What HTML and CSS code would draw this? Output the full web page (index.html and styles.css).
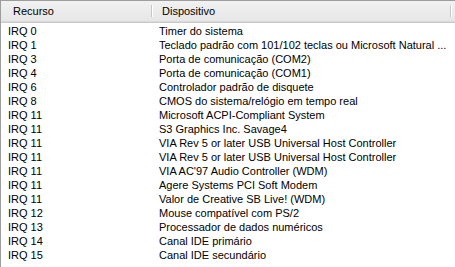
FILE: index.html
```html
<!DOCTYPE html>
<html>
<head>
<meta charset="utf-8">
<link rel="stylesheet" href="styles.css">
</head>
<body>
<div class="listview">
  <div class="header">
    <div class="hcell col1">Recurso</div>
    <div class="hcell col2">Dispositivo</div>
    <div class="hcell rest"></div>
  </div>
  <div class="rows">
    <div class="row"><span class="c1">IRQ 0</span><span class="c2">Timer do sistema</span></div>
    <div class="row"><span class="c1">IRQ 1</span><span class="c2">Teclado padrão com 101/102 teclas ou Microsoft Natural ...</span></div>
    <div class="row"><span class="c1">IRQ 3</span><span class="c2">Porta de comunicação (COM2)</span></div>
    <div class="row"><span class="c1">IRQ 4</span><span class="c2">Porta de comunicação (COM1)</span></div>
    <div class="row"><span class="c1">IRQ 6</span><span class="c2">Controlador padrão de disquete</span></div>
    <div class="row"><span class="c1">IRQ 8</span><span class="c2">CMOS do sistema/relógio em tempo real</span></div>
    <div class="row"><span class="c1">IRQ 11</span><span class="c2">Microsoft ACPI-Compliant System</span></div>
    <div class="row"><span class="c1">IRQ 11</span><span class="c2">S3 Graphics Inc. Savage4</span></div>
    <div class="row"><span class="c1">IRQ 11</span><span class="c2">VIA Rev 5 or later USB Universal Host Controller</span></div>
    <div class="row"><span class="c1">IRQ 11</span><span class="c2">VIA Rev 5 or later USB Universal Host Controller</span></div>
    <div class="row"><span class="c1">IRQ 11</span><span class="c2">VIA AC'97 Audio Controller (WDM)</span></div>
    <div class="row"><span class="c1">IRQ 11</span><span class="c2">Agere Systems PCI Soft Modem</span></div>
    <div class="row"><span class="c1">IRQ 11</span><span class="c2">Valor de Creative SB Live! (WDM)</span></div>
    <div class="row"><span class="c1">IRQ 12</span><span class="c2">Mouse compatível com PS/2</span></div>
    <div class="row"><span class="c1">IRQ 13</span><span class="c2">Processador de dados numéricos</span></div>
    <div class="row"><span class="c1">IRQ 14</span><span class="c2">Canal IDE primário</span></div>
    <div class="row"><span class="c1">IRQ 15</span><span class="c2">Canal IDE secundário</span></div>
  </div>
</div>
</body>
</html>
```
FILE: styles.css
```css
html, body {
  margin: 0;
  padding: 0;
  background: #ffffff;
}
body {
  font-family: "Liberation Sans", Arial, sans-serif;
  font-size: 11px;
  color: #000000;
}
.listview {
  width: 455px;
  height: 267px;
  box-sizing: border-box;
  border-top: 1px solid #9d9d9d;
  border-left: 1px solid #9d9d9d;
  overflow: hidden;
}
.header {
  display: flex;
  height: 22px;
  box-sizing: border-box;
  background: linear-gradient(#f1f1f1, #e6e6e6);
  border-bottom: 1px solid #c9c9c9;
  box-shadow: inset 0 -1px 0 #d9d9d9;
}
.hcell {
  box-sizing: border-box;
  height: 100%;
  display: flex;
  align-items: center;
  padding-bottom: 1px;
}
.col1 {
  width: 151px;
  padding-left: 12px;
  position: relative;
}
.col2 {
  width: 299px;
  padding-left: 10px;
  position: relative;
}
.col1::after, .col2::after {
  content: "";
  position: absolute;
  right: 0;
  top: 4px;
  bottom: 5px;
  width: 1px;
  background: #c7c7c7;
  box-shadow: 1px 0 0 #ffffff;
}
.rest {
  flex: 1;
}
.rows {
  padding-top: 1px;
}
.row {
  display: flex;
  height: 14px;
  line-height: 14px;
  white-space: nowrap;
}
.c1 {
  width: 151px;
  padding-left: 7px;
  box-sizing: border-box;
}
.c2 {
  padding-left: 7px;
}
```
